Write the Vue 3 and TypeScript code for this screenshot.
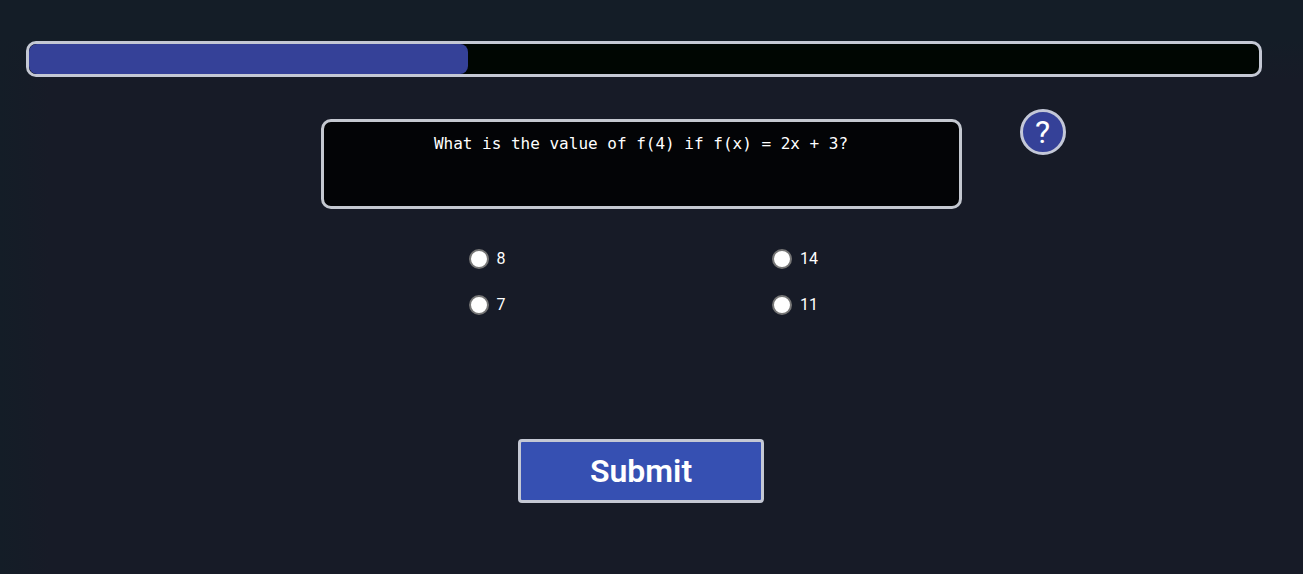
<script setup lang="ts">
import { ref } from 'vue'

interface Choice {
  id: string
  label: string
}

const question = 'What is the value of f(4) if f(x) = 2x + 3?'
const choices: Choice[] = [
  { id: 'choice-a', label: '8' },
  { id: 'choice-b', label: '14' },
  { id: 'choice-c', label: '7' },
  { id: 'choice-d', label: '11' },
]
const progress = 35.7
const selected = ref<string | null>(null)
</script>

<template>
  <main class="page">
    <div
      class="progress"
      role="progressbar"
      aria-label="Quiz progress"
      :aria-valuenow="progress"
      aria-valuemin="0"
      aria-valuemax="100"
    >
      <div class="progress-fill" :style="{ width: progress + '%' }"></div>
    </div>

    <form class="quiz" @submit.prevent>
      <div class="question">{{ question }}</div>
      <button type="button" class="help" aria-label="Help">?</button>

      <div class="choices" role="radiogroup" aria-label="Answers">
        <div v-for="choice in choices" :key="choice.id" class="choice">
          <input
            :id="choice.id"
            v-model="selected"
            type="radio"
            name="answer"
            :value="choice.id"
          />
          <label :for="choice.id">{{ choice.label }}</label>
        </div>
      </div>

      <button type="submit" class="submit">Submit</button>
    </form>
  </main>
</template>

<style>
body {
  margin: 0;
  background: #171b27;
}
</style>

<style scoped>
.page {
  box-sizing: border-box;
  min-height: 100vh;
  padding-top: 41px;
  background:
    linear-gradient(90deg, #141d27, transparent 50px),
    linear-gradient(#141d27 40px, #171b27 80px);
  color: #fff;
  font-family: Roboto, "Liberation Sans", sans-serif;
}

.progress {
  margin: 0 41px 0 26px;
  border: 3px solid #c4c8d4;
  border-radius: 10px;
  background: #000602;
}

.progress-fill {
  height: 30px;
  border-radius: 8px;
  background: #354198;
}

.quiz {
  display: grid;
  grid-template-columns: 1fr 2fr 1fr;
  margin: 32px 21px 0 0;
}

.question {
  grid-column: 2;
  box-sizing: border-box;
  min-height: 90px;
  margin-top: 10px;
  padding: 10px;
  border: 3px solid #c4c8d0;
  border-radius: 10px;
  background: #030406;
  font-family: "DejaVu Sans Mono", monospace;
  font-size: 16px;
  line-height: 24px;
  text-align: center;
}

.help {
  width: 46px;
  height: 46px;
  margin-left: 58px;
  padding: 0;
  border: 3px solid #c4c8d8;
  border-radius: 50%;
  background: #354198;
  color: #fff;
  font-family: inherit;
  font-size: 32px;
  line-height: 40px;
}

.choices {
  grid-column: 2;
  display: grid;
  grid-template-columns: 1fr 1fr;
  row-gap: 26px;
  margin: 40px -114px 0 148px;
}

.choice {
  display: flex;
  align-items: center;
  gap: 8px;
  height: 20px;
}

.choice input {
  appearance: none;
  box-sizing: border-box;
  width: 20px;
  height: 20px;
  margin: 0;
  border: 2px solid #767676;
  border-radius: 50%;
  background: #fff;
}

.choice input:checked {
  border-color: #354198;
  background: radial-gradient(#354198 5px, #fff 6px);
}

.choice label {
  font-size: 16px;
  line-height: 20px;
}

.submit {
  grid-column: 2;
  justify-self: center;
  width: 246px;
  height: 64px;
  margin-top: 124px;
  padding: 0;
  border: 3px solid #c4c8d4;
  border-radius: 4px;
  background: #3650b2;
  color: #fff;
  font-family: inherit;
  font-size: 32px;
  font-weight: 600;
}
</style>
